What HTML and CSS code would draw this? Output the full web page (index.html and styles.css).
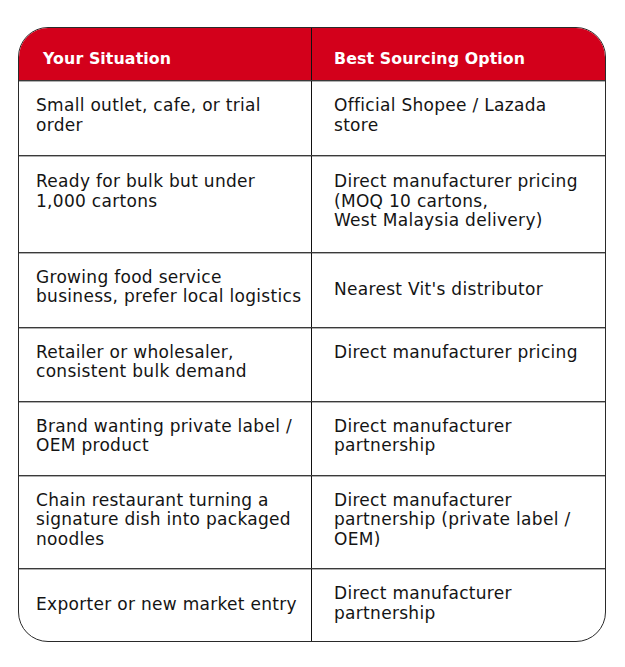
FILE: index.html
```html
<!DOCTYPE html>
<html>
<head>
<meta charset="utf-8">
<link rel="stylesheet" href="styles.css">
</head>
<body>
<div class="table">
  <div class="row head">
    <div class="cell left">Your Situation</div>
    <div class="cell right">Best Sourcing Option</div>
  </div>
  <div class="row">
    <div class="cell left">Small outlet, cafe, or trial<br>order</div>
    <div class="cell right">Official Shopee / Lazada<br>store</div>
  </div>
  <div class="row r3">
    <div class="cell left">Ready for bulk but under<br>1,000 cartons</div>
    <div class="cell right">Direct manufacturer pricing<br>(MOQ 10 cartons,<br>West Malaysia delivery)</div>
  </div>
  <div class="row">
    <div class="cell left">Growing food service<br>business, prefer local logistics</div>
    <div class="cell right mid">Nearest Vit's distributor</div>
  </div>
  <div class="row tight">
    <div class="cell left">Retailer or wholesaler,<br>consistent bulk demand</div>
    <div class="cell right">Direct manufacturer pricing</div>
  </div>
  <div class="row tight">
    <div class="cell left">Brand wanting private label /<br>OEM product</div>
    <div class="cell right">Direct manufacturer<br>partnership</div>
  </div>
  <div class="row r3b">
    <div class="cell left">Chain restaurant turning a<br>signature dish into packaged<br>noodles</div>
    <div class="cell right">Direct manufacturer<br>partnership (private label /<br>OEM)</div>
  </div>
  <div class="row last">
    <div class="cell left mid">Exporter or new market entry</div>
    <div class="cell right">Direct manufacturer<br>partnership</div>
  </div>
</div>
</body>
</html>
```

FILE: styles.css
```css
html, body {
  margin: 0;
  padding: 0;
  background: #ffffff;
}
body {
  padding: 27px 0 0 18px;
  font-family: "DejaVu Sans", "Liberation Sans", sans-serif;
  font-size: 17px;
  line-height: 19.5px;
  letter-spacing: 0.3px;
  color: #141414;
}
.table {
  width: 586px;
  border: 1.5px solid #2a2a2a;
  border-radius: 30px;
  overflow: hidden;
}
.row {
  display: grid;
  grid-template-columns: 293px 1fr;
  border-top: 1px solid #3a3a3a;
  box-shadow: inset 0 1px 0 #b0b0b0;
}
.row.head {
  border-top: none;
  box-shadow: none;
  background: #d3001b;
  color: #ffffff;
  font-weight: bold;
  font-size: 15.8px;
  letter-spacing: 0.1px;
  height: 52px;
}
.cell {
  padding: 15px 22px 20px 17px;
  white-space: nowrap;
}
.head .cell {
  padding-top: 9px;
  padding-bottom: 0;
  align-self: stretch;
  display: flex;
  align-items: center;
}
.head .cell.left {
  padding-left: 24px;
}
.cell.left {
  border-right: 1px solid #111111;
}
.cell.right {
  padding-left: 22px;
}
.row.tight .cell {
  padding-bottom: 19px;
}
.row.r3 .cell {
  padding-top: 16px;
  padding-bottom: 21px;
}
.row.r3b .cell {
  padding-top: 15px;
  padding-bottom: 19px;
}
.row.last .cell {
  padding-top: 15px;
  padding-bottom: 18px;
}
.row .cell.mid {
  padding-top: 0;
  padding-bottom: 0;
  align-self: stretch;
  display: flex;
  align-items: center;
}
```
